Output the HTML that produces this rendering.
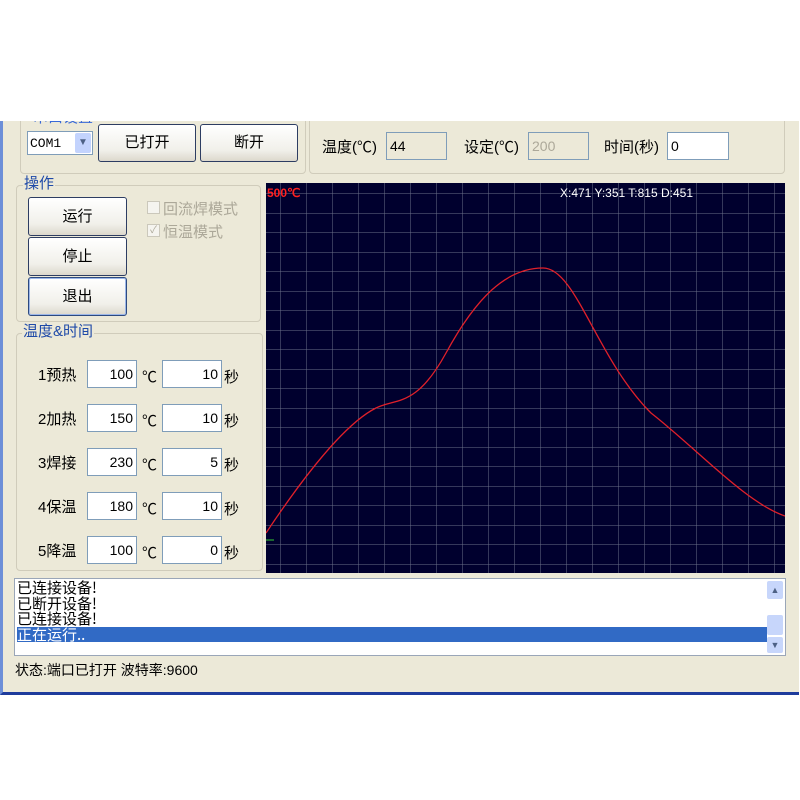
<!DOCTYPE html><html><head><meta charset="utf-8"><style>
body{margin:0;width:800px;height:800px;background:#fff;position:relative;overflow:hidden;font-family:"Liberation Sans","Noto Sans CJK SC","WenQuanYi Zen Hei",sans-serif;}
.a{position:absolute;}
.win{left:0;top:120px;width:796px;height:572px;background:#ece9d8;border-left:3px solid #6d8fd8;border-bottom:3px solid #1e3c9c;}
.gb{position:absolute;border:1px solid #d0ccbb;border-radius:4px;}
.lbl{position:absolute;color:#1f4aa8;font-size:15px;background:#ece9d8;padding:0 1px;line-height:16px;white-space:nowrap;}
.btn{position:absolute;border:1px solid #2d3d62;border-radius:3px;background:linear-gradient(#fff,#f1f0ea 70%,#dcd8cc);font-size:15px;text-align:center;color:#000;}
.tb{position:absolute;background:#fff;border:1px solid #7f9db9;font-size:14px;height:24px;line-height:24px;box-sizing:border-box;padding:0 3px;white-space:nowrap;}
.t{position:absolute;font-size:15px;color:#000;white-space:nowrap;}
</style></head><body>
<div class="a win"></div>
<div class="gb" style="left:20px;top:110px;width:284px;height:62px"></div>
<div class="lbl" style="left:32px;top:110px;color:#3a6ad8">串口设置</div>
<div class="gb" style="left:309px;top:110px;width:474px;height:62px"></div>
<div class="a" style="left:0;top:0;width:800px;height:121px;background:#fff"></div>
<div class="tb" style="left:27px;top:131px;width:66px;height:24px;font-family:'Liberation Mono',monospace;font-size:13px;padding-left:2px">COM1</div>
<div class="a" style="left:75px;top:133px;width:16px;height:20px;background:#c3d3fd;border-radius:2px;color:#4d6185;font-size:10px;text-align:center;line-height:20px">▼</div>
<div class="btn" style="left:98px;top:124px;width:96px;height:36px;line-height:36px">已打开</div>
<div class="btn" style="left:200px;top:124px;width:96px;height:36px;line-height:36px">断开</div>
<div class="t" style="left:322px;top:136px">温度(℃)</div>
<div class="tb" style="left:386px;top:132px;width:61px;height:28px;background:#ece9d8;line-height:26px">44</div>
<div class="t" style="left:464px;top:136px">设定(℃)</div>
<div class="tb" style="left:528px;top:132px;width:61px;height:28px;background:#ece9d8;color:#aca899;line-height:26px">200</div>
<div class="t" style="left:604px;top:136px">时间(秒)</div>
<div class="tb" style="left:667px;top:132px;width:62px;height:28px;line-height:26px">0</div>

<div class="gb" style="left:16px;top:185px;width:243px;height:135px"></div>
<div class="lbl" style="left:23px;top:176px">操作</div>
<div class="btn" style="left:28px;top:197px;width:97px;height:37px;line-height:37px">运行</div>
<div class="btn" style="left:28px;top:237px;width:97px;height:37px;line-height:37px">停止</div>
<div class="btn" style="left:28px;top:277px;width:97px;height:37px;line-height:37px;border-color:#2d4a80;box-shadow:inset 0 0 0 1px #9cb7e8">退出</div>
<div class="a" style="left:147px;top:201px;width:11px;height:11px;border:1px solid #cbc8bb;background:#f5f4ef"></div>
<div class="t" style="left:163px;top:198px;color:#aca899">回流焊模式</div>
<div class="a" style="left:147px;top:224px;width:11px;height:11px;border:1px solid #cbc8bb;background:#f5f4ef;color:#aca899;font-size:10px;line-height:11px;text-align:center">✓</div>
<div class="t" style="left:163px;top:221px;color:#aca899">恒温模式</div>

<div class="gb" style="left:16px;top:333px;width:245px;height:236px"></div>
<div class="lbl" style="left:22px;top:324px">温度&amp;时间</div>
<div class="t" style="left:38px;top:364px">1预热</div><div class="tb" style="left:87px;top:360px;width:50px;height:28px;text-align:right;line-height:26px">100</div><div class="t" style="left:142px;top:366px">℃</div><div class="tb" style="left:162px;top:360px;width:60px;height:28px;text-align:right;line-height:26px">10</div><div class="t" style="left:224px;top:366px">秒</div>
<div class="t" style="left:38px;top:408px">2加热</div><div class="tb" style="left:87px;top:404px;width:50px;height:28px;text-align:right;line-height:26px">150</div><div class="t" style="left:142px;top:410px">℃</div><div class="tb" style="left:162px;top:404px;width:60px;height:28px;text-align:right;line-height:26px">10</div><div class="t" style="left:224px;top:410px">秒</div>
<div class="t" style="left:38px;top:452px">3焊接</div><div class="tb" style="left:87px;top:448px;width:50px;height:28px;text-align:right;line-height:26px">230</div><div class="t" style="left:142px;top:454px">℃</div><div class="tb" style="left:162px;top:448px;width:60px;height:28px;text-align:right;line-height:26px">5</div><div class="t" style="left:224px;top:454px">秒</div>
<div class="t" style="left:38px;top:496px">4保温</div><div class="tb" style="left:87px;top:492px;width:50px;height:28px;text-align:right;line-height:26px">180</div><div class="t" style="left:142px;top:498px">℃</div><div class="tb" style="left:162px;top:492px;width:60px;height:28px;text-align:right;line-height:26px">10</div><div class="t" style="left:224px;top:498px">秒</div>
<div class="t" style="left:38px;top:540px">5降温</div><div class="tb" style="left:87px;top:536px;width:50px;height:28px;text-align:right;line-height:26px">100</div><div class="t" style="left:142px;top:542px">℃</div><div class="tb" style="left:162px;top:536px;width:60px;height:28px;text-align:right;line-height:26px">0</div><div class="t" style="left:224px;top:542px">秒</div>

<svg class="a" style="left:266px;top:183px" width="519" height="390" viewBox="0 0 519 390">
<defs><pattern id="g" width="26" height="19.5" patternUnits="userSpaceOnUse" x="-12" y="-9"><path d="M0 0H26M0 0V19.5" stroke="#6a7088" stroke-width="1" fill="none"/></pattern></defs>
<rect width="519" height="390" fill="#00002e"/>
<rect width="519" height="390" fill="url(#g)"/>
<path d="M0 350 C40 290 80 240 110 225 C130 215 150 225 180 170 C210 115 240 85 277 85 C310 85 330 175 385 230 C430 265 480 320 519 333" stroke="#e0202a" stroke-width="1.3" fill="none"/>
<path d="M0 357H8" stroke="#3c3" stroke-width="1"/>
<text x="1" y="14" fill="#ff2020" font-size="12" font-weight="bold" font-family="Liberation Sans,sans-serif">500℃</text>
<text x="294" y="14" fill="#fff" font-size="12" font-family="Liberation Sans,sans-serif">X:471 Y:351 T:815 D:451</text>
</svg>

<div class="a" style="left:14px;top:578px;width:770px;height:76px;background:#fff;border:1px solid #9aa6b8"></div>
<div class="a" style="left:17px;top:580px;font-size:15px;line-height:15.5px;width:750px;font-family:'Noto Sans CJK SC',sans-serif">已连接设备!<br>已断开设备!<br>已连接设备!<div style="background:#316ac5;color:#fff;width:750px">正在运行..</div></div>
<div class="a" style="left:767px;top:581px;width:16px;height:18px;background:#c7d6fb;border-radius:2px;font-size:9px;text-align:center;line-height:18px;color:#4d6185">▲</div>
<div class="a" style="left:767px;top:615px;width:16px;height:20px;background:#c7d6fb;border-radius:2px"></div>
<div class="a" style="left:767px;top:637px;width:16px;height:16px;background:#c7d6fb;border-radius:2px;font-size:9px;text-align:center;line-height:16px;color:#4d6185">▼</div>
<div class="t" style="left:15px;top:660px;font-size:14px">状态:端口已打开 波特率:9600</div>
</body></html>
